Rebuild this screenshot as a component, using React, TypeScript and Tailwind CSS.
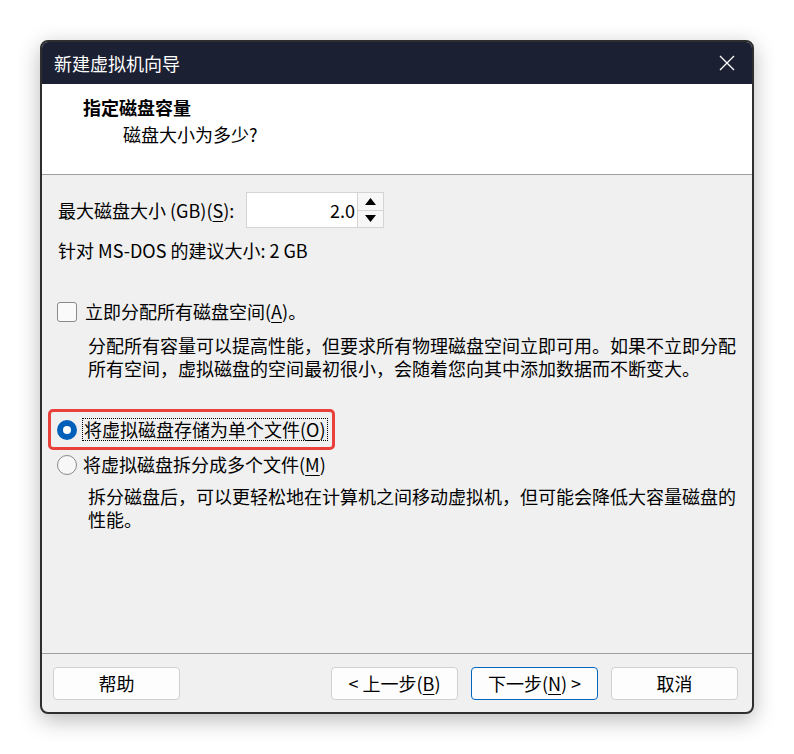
import React from "react";

const U = ({ c }: { c: string }) => (
  <span className="underline decoration-1 underline-offset-[3px]">{c}</span>
);

function Btn({ children, primary }: { children: React.ReactNode; primary?: boolean }) {
  return (
    <div
      className={
        "w-[127px] h-[33px] rounded-[4px] bg-[#fdfdfd] flex items-center justify-center text-[18px] leading-[23px] text-black " +
        (primary ? "border-[1.5px] border-[#0067c0]" : "border border-[#d0d0d0]")
      }
    >
      {children}
    </div>
  );
}

export default function App() {
  return (
    <div className="w-[794px] h-[754px] bg-white pt-[40px] pl-[40px] font-['Noto_Sans_CJK_SC',sans-serif] text-black">
      <div className="w-[714px] h-[674px] border-2 border-[#2e2e2e] rounded-[8px] overflow-hidden flex flex-col bg-[#f0f0f0] shadow-[0_6px_22px_rgba(0,0,0,0.28)]">
        {/* title bar */}
        <div className="h-[42px] bg-[#1c2033] flex items-center justify-between pl-[12px] pr-[17px]">
          <span className="text-white text-[18px] leading-[23px]">新建虚拟机向导</span>
          <svg width="16" height="16" viewBox="0 0 16 16">
            <path d="M1 1 L15 15 M15 1 L1 15" stroke="#ffffff" strokeWidth="1.3" />
          </svg>
        </div>
        {/* header */}
        <div className="h-[91px] bg-white border-b border-[#a0a0a0] pt-[12px]">
          <div className="pl-[41px] text-[18px] leading-[23px] font-bold">指定磁盘容量</div>
          <div className="pl-[81px] mt-[4px] text-[18px] leading-[23px]">磁盘大小为多少?</div>
        </div>
        {/* body */}
        <div className="flex-1 flex flex-col pl-[16px] pt-[17px] text-[18px] leading-[23px]">
          <div className="flex items-center h-[36px]">
            <span className="w-[188px]">
              最大磁盘大小 (GB)(<U c="S" />):
            </span>
            <div className="flex h-[36px] border border-[#d4d4d4]">
              <div className="w-[110px] bg-white flex items-center justify-end pr-[2px]">2.0</div>
              <div className="w-[26px] flex flex-col border-l border-[#d4d4d4]">
                <div className="flex-1 bg-[#f7f7f7] border-b border-[#d4d4d4] flex items-center justify-center">
                  <svg width="11" height="7" viewBox="0 0 11 7">
                    <path d="M0 7 L5.5 0 L11 7 Z" fill="#000" />
                  </svg>
                </div>
                <div className="flex-1 bg-[#f7f7f7] flex items-center justify-center">
                  <svg width="11" height="7" viewBox="0 0 11 7">
                    <path d="M0 0 L11 0 L5.5 7 Z" fill="#000" />
                  </svg>
                </div>
              </div>
            </div>
          </div>
          <div className="mt-[11px]">针对 MS-DOS 的建议大小: 2 GB</div>

          <div className="mt-[38px] flex items-center">
            <div className="w-[20px] h-[20px] rounded-[3px] border border-[#8a8a8a] bg-[#fafafa] ml-[-1px]" />
            <span className="ml-[8px]">
              立即分配所有磁盘空间(<U c="A" />)。
            </span>
          </div>
          <div className="mt-[11px] pl-[30px] w-[682px]">
            分配所有容量可以提高性能，但要求所有物理磁盘空间立即可用。如果不立即分配所有空间，虚拟磁盘的空间最初很小，会随着您向其中添加数据而不断变大。
          </div>

          <div className="mt-[38px] flex items-center relative">
            <div className="absolute left-[-10px] top-[-9px] w-[287px] h-[41px] border-[3px] border-[#e8403a] rounded-[5px]" />
            <div className="w-[20px] h-[20px] rounded-full bg-[#005fb8] flex items-center justify-center ml-[-1px]">
              <div className="w-[8px] h-[8px] rounded-full bg-white" />
            </div>
            <span className="ml-[5px] border border-dotted border-black px-[1px] leading-[21px]">
              将虚拟磁盘存储为单个文件(<U c="O" />)
            </span>
          </div>
          <div className="mt-[12px] flex items-center">
            <div className="w-[20px] h-[20px] rounded-full border border-[#8a8a8a] bg-[#f7f7f7] ml-[-1px]" />
            <span className="ml-[6px]">
              将虚拟磁盘拆分成多个文件(<U c="M" />)
            </span>
          </div>
          <div className="mt-[9px] pl-[30px] w-[682px]">
            拆分磁盘后，可以更轻松地在计算机之间移动虚拟机，但可能会降低大容量磁盘的性能。
          </div>
        </div>
        {/* footer */}
        <div className="h-[59px] border-t border-[#a0a0a0] flex items-start pt-[13px] pl-[11px] pr-[14px]">
          <Btn>帮助</Btn>
          <div className="flex-1" />
          <div className="flex gap-[13px]">
            <Btn>
              &lt;&nbsp;上一步(<U c="B" />)
            </Btn>
            <Btn primary>
              下一步(<U c="N" />)&nbsp;&gt;
            </Btn>
            <Btn>取消</Btn>
          </div>
        </div>
      </div>
    </div>
  );
}
